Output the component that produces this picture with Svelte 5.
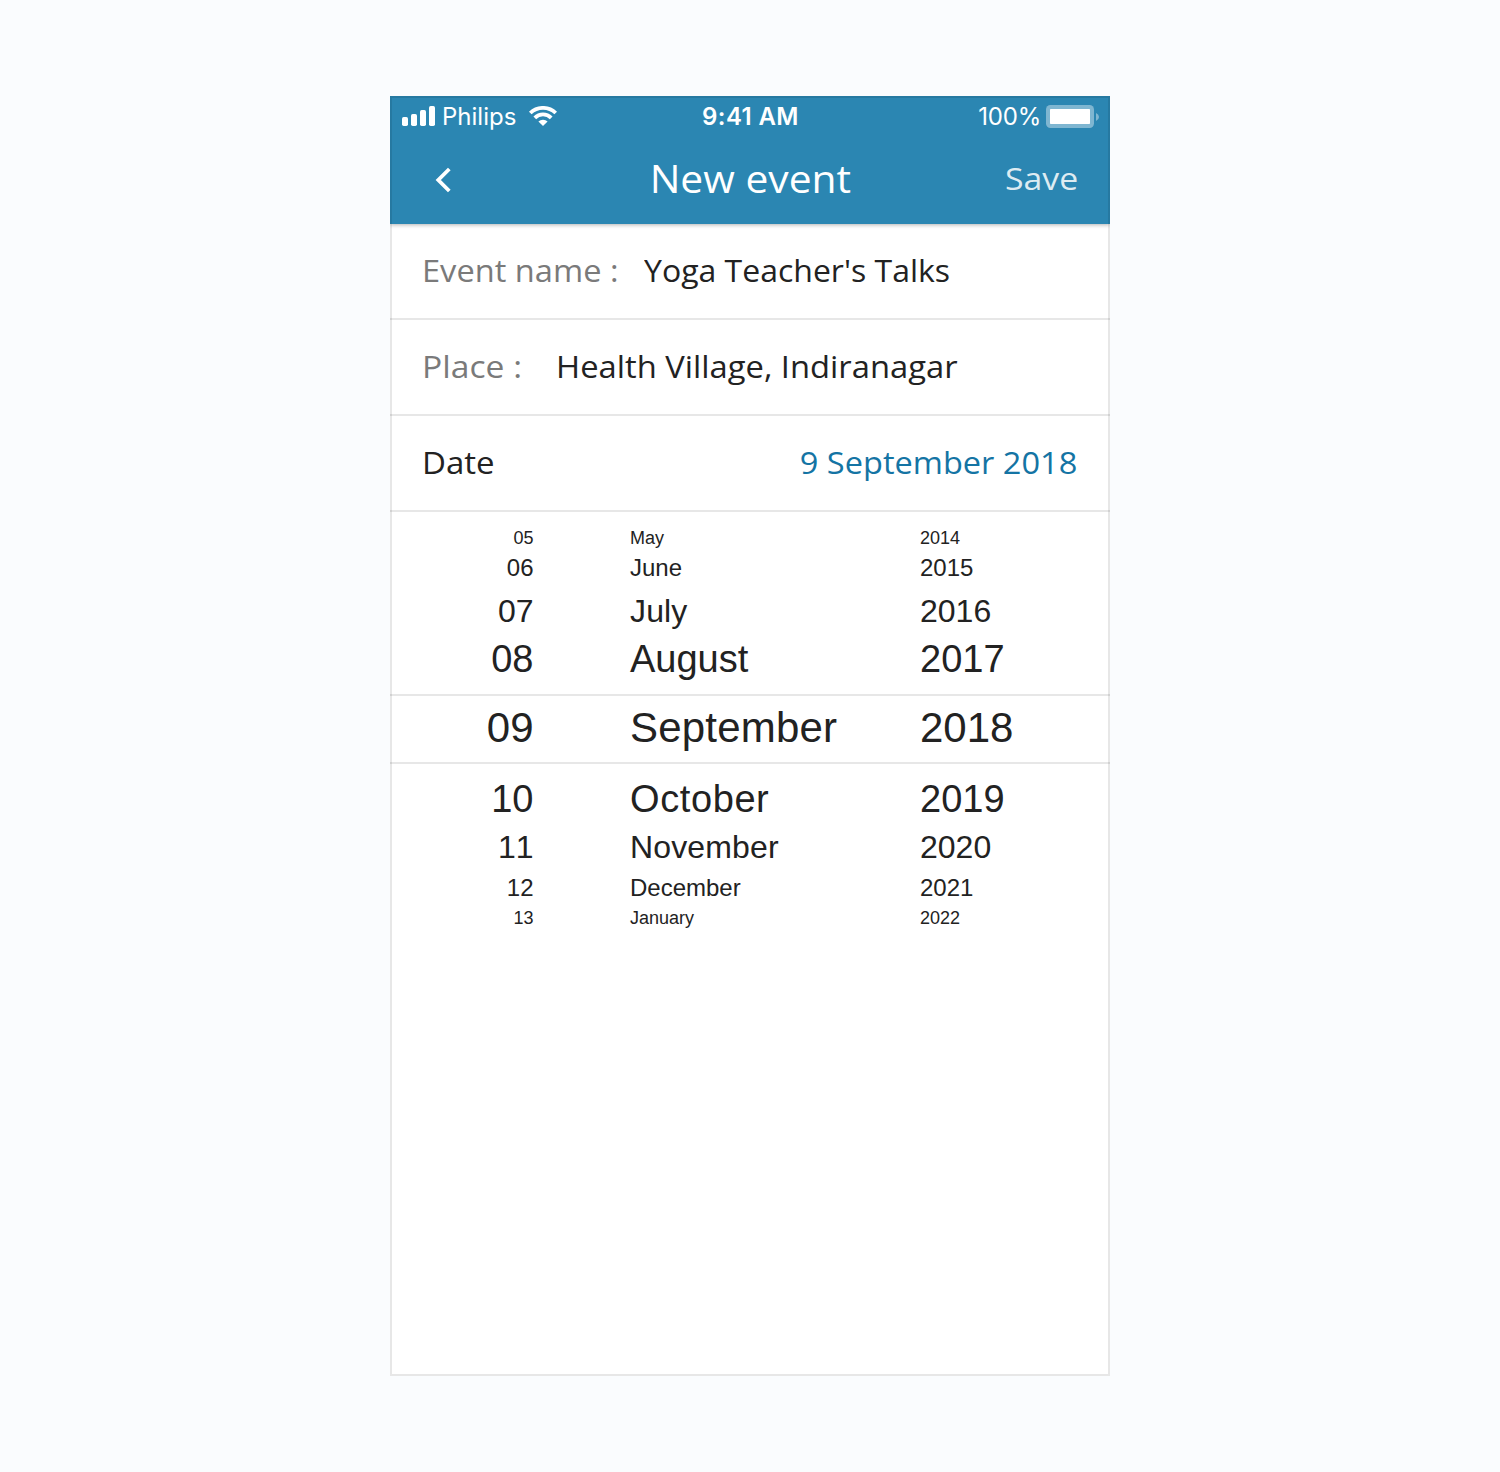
<script>
  const fields = [
    { id: 'event', label: 'Event name :', value: "Yoga Teacher's Talks" },
    { id: 'place', label: 'Place :', value: 'Health Village, Indiranagar' }
  ];

  const rows = [
    { day: '05', month: 'May', year: '2014', kind: 'far first' },
    { day: '06', month: 'June', year: '2015', kind: 'mid' },
    { day: '07', month: 'July', year: '2016', kind: 'near' },
    { day: '08', month: 'August', year: '2017', kind: 'next' },
    { day: '09', month: 'September', year: '2018', kind: 'selected' },
    { day: '10', month: 'October', year: '2019', kind: 'next wide' },
    { day: '11', month: 'November', year: '2020', kind: 'near unkerned' },
    { day: '12', month: 'December', year: '2021', kind: 'mid after' },
    { day: '13', month: 'January', year: '2022', kind: 'far last' }
  ];
</script>

<main class="stage">
  <section class="phone">
    <header class="top">
      <div class="status">
        <div class="carrier">
          <svg class="signal" width="33" height="20" viewBox="0 0 33 20" fill="#fff">
            <rect x="0" y="11" width="6" height="9" rx="1.7" />
            <rect x="9" y="8" width="6" height="12" rx="1.7" />
            <rect x="18" y="4" width="6" height="16" rx="1.7" />
            <rect x="27" y="0" width="6" height="20" rx="1.7" />
          </svg>
          <span class="network">Philips</span>
          <svg class="wifi" width="30" height="20" viewBox="0 0 30 20">
            <g fill="none" stroke="#fff" stroke-width="3.8">
              <path d="M2.3 7 A18.3 18.3 0 0 1 27.7 7" />
              <path d="M6.8 11.8 A11.6 11.6 0 0 1 23.2 11.8" />
            </g>
            <path fill="#fff" d="M10.4 15.6 A6.5 6.5 0 0 1 19.6 15.6 L15 20 Z" />
          </svg>
        </div>
        <span class="clock">9:41 AM</span>
        <div class="power">
          <span class="percent">100%</span>
          <svg width="53" height="23" viewBox="0 0 53 23">
            <rect width="48" height="23" rx="4.5" fill="#fff" fill-opacity=".4" />
            <rect x="4" y="4" width="40" height="15" rx=".8" fill="#fff" />
            <path d="M50 8 Q53 9.3 53 12 Q53 14.7 50 16 Z" fill="#fff" fill-opacity=".4" />
          </svg>
        </div>
      </div>
      <nav class="bar">
        <svg class="back" width="16" height="26" viewBox="0 0 16 26">
          <path d="M14.3 2 L3.3 13 L14.3 24" fill="none" stroke="#fff" stroke-width="3.8" />
        </svg>
        <h1>New event</h1>
        <span class="save">Save</span>
      </nav>
    </header>

    {#each fields as field}
      <div class="field">
        <span class="label {field.id}-label"><span>{field.label}</span></span>
        <span class="{field.id}-value">{field.value}</span>
      </div>
    {/each}
    <div class="field spread">
      <span class="date-label">Date</span>
      <span class="date-value">9 September 2018</span>
    </div>

    <div class="picker">
      {#each rows as row}
        <div class="row {row.kind}">
          <span class="day">{row.day}</span>
          <span class="month">{row.month}</span>
          <span>{row.year}</span>
        </div>
      {/each}
    </div>
  </section>
</main>

<style>
  :global(body) {
    margin: 0;
    background: #fafcfe;
  }
  .stage {
    box-sizing: border-box;
    height: 1472px;
    padding: 96px 0;
    display: flex;
    justify-content: center;
    font-family: 'Open Sans', sans-serif;
    color: #222;
  }
  .phone {
    position: relative;
    width: 720px;
    height: 1280px;
    background: #fff;
  }
  /* Frame drawn above the content so it tints the header too */
  .phone::after {
    content: '';
    position: absolute;
    inset: 0;
    border: 2px solid rgba(0, 0, 0, 0.095);
    pointer-events: none;
  }
  .top {
    position: relative;
    height: 128px;
    background: #2b86b2;
    color: #fff;
    box-shadow: 0 1px 4px rgba(0, 0, 0, 0.3);
    clip-path: inset(0 0 -8px 0);
  }
  .status {
    height: 40px;
    display: grid;
    grid-template-columns: 1fr auto 1fr;
    align-items: center;
    font: 400 24px/38px Inter, sans-serif;
    padding: 0 11px 0 12px;
  }
  .carrier,
  .power {
    display: flex;
    align-items: center;
    height: 40px;
  }
  .power {
    justify-content: flex-end;
    gap: 5px;
  }
  .network {
    margin: 1px 12px 0 7px;
  }
  .clock {
    font-weight: 600;
    letter-spacing: 0.4px;
    padding-top: 1px;
  }
  .percent {
    padding-top: 1px;
    letter-spacing: -0.2px;
  }
  .bar {
    height: 88px;
    padding: 0 32px;
    display: grid;
    grid-template-columns: 1fr auto 1fr;
    align-items: center;
  }
  .back {
    margin-left: 13px;
  }
  /* Headings and fields use slightly extended letterforms */
  h1 {
    margin: 0;
    padding-bottom: 5px;
    font: 400 39px/80px 'Open Sans', sans-serif;
    transform: scaleX(1.045);
  }
  .save {
    justify-self: end;
    padding-bottom: 4px;
    font-size: 31px;
    color: rgba(255, 255, 255, 0.85);
    transform: scaleX(1.09);
    transform-origin: right;
  }
  .field {
    box-sizing: border-box;
    height: 96px;
    padding: 0 32px;
    border-bottom: 2px solid #e7e7e7;
    display: flex;
    align-items: center;
    font-size: 31px;
    line-height: 92px;
    padding-bottom: 2px;
    white-space: nowrap;
  }
  .spread {
    justify-content: space-between;
    padding-right: 33px;
  }
  .label {
    color: #7a7a7a;
  }
  .label span {
    display: inline-block;
    transform: scaleX(1.052);
    transform-origin: left;
  }
  .event-label {
    width: 222px;
  }
  .place-label {
    width: 134px;
  }
  .place-label span {
    transform: scaleX(1.085);
  }
  .event-value {
    transform: scaleX(1.032);
    transform-origin: left;
  }
  .place-value {
    transform: scaleX(1.056);
    transform-origin: left;
  }
  .date-label {
    transform: scaleX(1.065);
    transform-origin: left;
  }
  .date-value {
    color: #1474a4;
    transform: scaleX(1.05);
    transform-origin: right;
  }
  .picker {
    font-family: 'Liberation Sans', Arial, sans-serif;
    padding-top: 11px;
  }
  .row {
    box-sizing: border-box;
    display: grid;
    grid-template-columns: 143.5px 290px 1fr;
  }
  .row span + span {
    padding-left: 96.5px;
  }
  .day {
    text-align: right;
  }
  .far {
    font-size: 18px;
    line-height: 30px;
  }
  .mid {
    font-size: 24px;
    line-height: 30px;
  }
  .near {
    font-size: 32px;
    line-height: 56px;
  }
  .unkerned {
    font-kerning: none;
  }
  .near .month {
    letter-spacing: 0.15px;
  }
  .next {
    font-size: 38px;
    line-height: 40px;
  }
  .wide .month {
    letter-spacing: 0.6px;
  }
  .selected {
    height: 70px;
    margin: 15px 0;
    border: solid #e7e7e7;
    border-width: 2px 0;
    font-size: 42px;
    line-height: 64px;
  }
  .selected .month {
    letter-spacing: 0.2px;
  }
  .after {
    line-height: 26px;
  }
  .last {
    line-height: 34px;
  }
</style>
